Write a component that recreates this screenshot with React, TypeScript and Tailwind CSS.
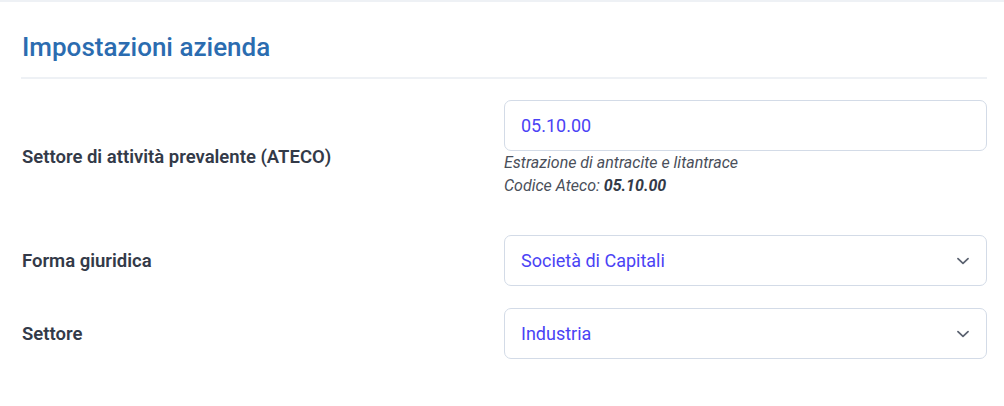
import React from "react";

function Chevron() {
  return (
    <svg width="22" height="22" viewBox="0 0 24 24" fill="none" stroke="#5b6270" strokeWidth="1.9" strokeLinecap="round" strokeLinejoin="round">
      <path d="M6.5 9.5l5.5 5 5.5-5" />
    </svg>
  );
}

export default function App() {
  return (
    <div className="w-[1004px] h-[406px] bg-white border-t-2 border-[#eef1f5]" style={{ fontFamily: "Roboto, 'Liberation Sans', sans-serif" }}>
      <div className="pl-[21px] pr-[17px]">
        <div className="pt-[30px] pb-[14px] border-b-2 border-[#eef1f5]">
          <h1 className="text-[26px] leading-[31px] font-medium text-[#2b6cb0] pl-[1px]">Impostazioni azienda</h1>
        </div>
        <div className="pt-[21px] flex flex-col">
          <div className="flex">
            <div className="w-[483px] flex items-center pl-[1px] pt-[18px]">
              <span className="text-[18.5px] font-semibold text-[#333a48]">Settore di attività prevalente (ATECO)</span>
            </div>
            <div className="flex-1">
              <div className="h-[51px] rounded-[7px] border border-[#d3dbe7] flex items-center px-[16px] text-[18px] text-[#4a43f5]">05.10.00</div>
              <div className="mt-[0px] text-[16px] italic text-[#4a4f5a] leading-[23px]">
                <div>Estrazione di antracite e litantrace</div>
                <div>Codice Ateco: <span className="font-bold text-[#333a48]">05.10.00</span></div>
              </div>
            </div>
          </div>
          <div className="flex mt-[38px]">
            <div className="w-[483px] flex items-center pl-[1px] pt-[3px]">
              <span className="text-[18.5px] font-semibold text-[#333a48]">Forma giuridica</span>
            </div>
            <div className="flex-1 h-[51px] rounded-[7px] border border-[#d3dbe7] flex items-center justify-between pl-[16px] pr-[12px] text-[18px] text-[#4a43f5]">
              <span>Società di Capitali</span>
              <Chevron />
            </div>
          </div>
          <div className="flex mt-[22px]">
            <div className="w-[483px] flex items-center pl-[1px] pt-[2px]">
              <span className="text-[18.5px] font-semibold text-[#333a48]">Settore</span>
            </div>
            <div className="flex-1 h-[51px] rounded-[7px] border border-[#d3dbe7] flex items-center justify-between pl-[16px] pr-[12px] text-[18px] text-[#4a43f5]">
              <span>Industria</span>
              <Chevron />
            </div>
          </div>
        </div>
      </div>
    </div>
  );
}
